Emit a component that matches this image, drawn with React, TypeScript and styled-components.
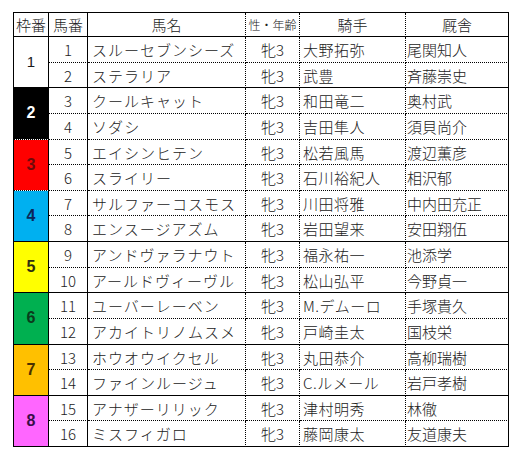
import React from "react";
import styled, { createGlobalStyle } from "styled-components";

const GlobalStyle = createGlobalStyle`
  html, body {
    margin: 0;
    padding: 0;
    background: #ffffff;
  }
  body {
    font-family: "Noto Sans CJK JP", "Noto Sans", sans-serif;
  }
`;

type Line = "solid" | "dotted";

interface Horse {
  num: number;
  name: string;
  jockey: string;
  trainer: string;
}

interface Waku {
  waku: number;
  bg: string;
  fg: string;
  bold: boolean;
  bottom: Line;
  horses: Horse[];
}

const ROW_HEIGHTS = [26, 25, 26, 26, 25, 26, 25, 26, 26, 25, 26, 26, 25, 26, 25, 26];

const WAKUS: Waku[] = [
  {
    waku: 1, bg: "#ffffff", fg: "#1a1a1a", bold: false, bottom: "solid",
    horses: [
      { num: 1, name: "スルーセブンシーズ", jockey: "大野拓弥", trainer: "尾関知人" },
      { num: 2, name: "ステラリア", jockey: "武豊", trainer: "斉藤崇史" },
    ],
  },
  {
    waku: 2, bg: "#000000", fg: "#ffffff", bold: true, bottom: "dotted",
    horses: [
      { num: 3, name: "クールキャット", jockey: "和田竜二", trainer: "奥村武" },
      { num: 4, name: "ソダシ", jockey: "吉田隼人", trainer: "須貝尚介" },
    ],
  },
  {
    waku: 3, bg: "#ff0000", fg: "#6e0a0a", bold: true, bottom: "dotted",
    horses: [
      { num: 5, name: "エイシンヒテン", jockey: "松若風馬", trainer: "渡辺薫彦" },
      { num: 6, name: "スライリー", jockey: "石川裕紀人", trainer: "相沢郁" },
    ],
  },
  {
    waku: 4, bg: "#00b0f0", fg: "#0c2658", bold: true, bottom: "solid",
    horses: [
      { num: 7, name: "サルファーコスモス", jockey: "川田将雅", trainer: "中内田充正" },
      { num: 8, name: "エンスージアズム", jockey: "岩田望来", trainer: "安田翔伍" },
    ],
  },
  {
    waku: 5, bg: "#ffff00", fg: "#2e2e10", bold: true, bottom: "solid",
    horses: [
      { num: 9, name: "アンドヴァラナウト", jockey: "福永祐一", trainer: "池添学" },
      { num: 10, name: "アールドヴィーヴル", jockey: "松山弘平", trainer: "今野貞一" },
    ],
  },
  {
    waku: 6, bg: "#00b050", fg: "#0b3a1c", bold: true, bottom: "solid",
    horses: [
      { num: 11, name: "ユーバーレーベン", jockey: "M.デムーロ", trainer: "手塚貴久" },
      { num: 12, name: "アカイトリノムスメ", jockey: "戸崎圭太", trainer: "国枝栄" },
    ],
  },
  {
    waku: 7, bg: "#ffc000", fg: "#4a3000", bold: true, bottom: "solid",
    horses: [
      { num: 13, name: "ホウオウイクセル", jockey: "丸田恭介", trainer: "高柳瑞樹" },
      { num: 14, name: "ファインルージュ", jockey: "C.ルメール", trainer: "岩戸孝樹" },
    ],
  },
  {
    waku: 8, bg: "#ff66ff", fg: "#3a0e48", bold: true, bottom: "solid",
    horses: [
      { num: 15, name: "アナザーリリック", jockey: "津村明秀", trainer: "林徹" },
      { num: 16, name: "ミスフィガロ", jockey: "藤岡康太", trainer: "友道康夫" },
    ],
  },
];

const Page = styled.div`
  padding: 12px 0 0 13px;
`;

const Table = styled.div`
  display: grid;
  grid-template-columns: 35px 39px 158px 54px 106px 103px;
  grid-template-rows: 24px ${ROW_HEIGHTS.map((h) => `${h}px`).join(" ")};
  width: max-content;
  border-left: 1px solid #000;
  border-top: 1px solid #000;
  color: #222;
  font-size: 15px;
  font-weight: 300;
  line-height: 1;
`;

const Cell = styled.div<{
  $right: Line;
  $bottom: Line;
  $align?: "left" | "center";
  $pad?: number;
  $spacing?: number;
}>`
  box-sizing: border-box;
  display: flex;
  align-items: center;
  justify-content: ${(p) => (p.$align === "left" ? "flex-start" : "center")};
  padding-left: ${(p) => (p.$pad ? `${p.$pad}px` : "0")};
  letter-spacing: ${(p) => (p.$spacing ? `${p.$spacing}px` : "0")};
  border-right: 1px ${(p) => p.$right} #000;
  border-bottom: 1px ${(p) => p.$bottom} #000;
  white-space: nowrap;
  overflow: hidden;
`;

const HeadCell = styled(Cell)<{ $small?: boolean }>`
  font-size: ${(p) => (p.$small ? "12px" : "15px")};
`;

const WakuCell = styled(Cell)<{ $bg: string; $fg: string; $bold: boolean }>`
  grid-row: span 2;
  background: ${(p) => p.$bg};
  background-clip: padding-box;
  color: ${(p) => p.$fg};
  font-weight: ${(p) => (p.$bold ? 700 : 400)};
  font-family: "Liberation Sans", "Noto Sans CJK JP", sans-serif;
  font-size: ${(p) => (p.$bold ? "16px" : "15px")};
  padding-bottom: 1px;
`;

const COLS: { label: string; right: Line; small?: boolean }[] = [
  { label: "枠番", right: "solid" },
  { label: "馬番", right: "solid" },
  { label: "馬名", right: "dotted" },
  { label: "性・年齢", right: "dotted", small: true },
  { label: "騎手", right: "dotted" },
  { label: "厩舎", right: "solid" },
];

export default function App() {
  return (
    <>
      <GlobalStyle />
      <Page>
        <Table>
          {COLS.map((c) => (
            <HeadCell key={c.label} $right={c.right} $bottom="solid" $small={c.small}>
              {c.label}
            </HeadCell>
          ))}
          {WAKUS.map((w) => (
            <React.Fragment key={w.waku}>
              <WakuCell $right="solid" $bottom={w.bottom} $bg={w.bg} $fg={w.fg} $bold={w.bold}>
                {w.waku}
              </WakuCell>
              {w.horses.map((h, i) => {
                const bottom: Line = i === 0 ? "dotted" : w.bottom;
                return (
                  <React.Fragment key={h.num}>
                    <Cell $right="solid" $bottom={bottom}>{h.num}</Cell>
                    <Cell $right="dotted" $bottom={bottom} $align="left" $pad={4} $spacing={1}>
                      {h.name}
                    </Cell>
                    <Cell $right="dotted" $bottom={bottom}>牝3</Cell>
                    <Cell $right="dotted" $bottom={bottom} $align="left" $pad={3} $spacing={0.5}>
                      {h.jockey}
                    </Cell>
                    <Cell $right="solid" $bottom={bottom} $align="left" $pad={1}>
                      {h.trainer}
                    </Cell>
                  </React.Fragment>
                );
              })}
            </React.Fragment>
          ))}
        </Table>
      </Page>
    </>
  );
}
